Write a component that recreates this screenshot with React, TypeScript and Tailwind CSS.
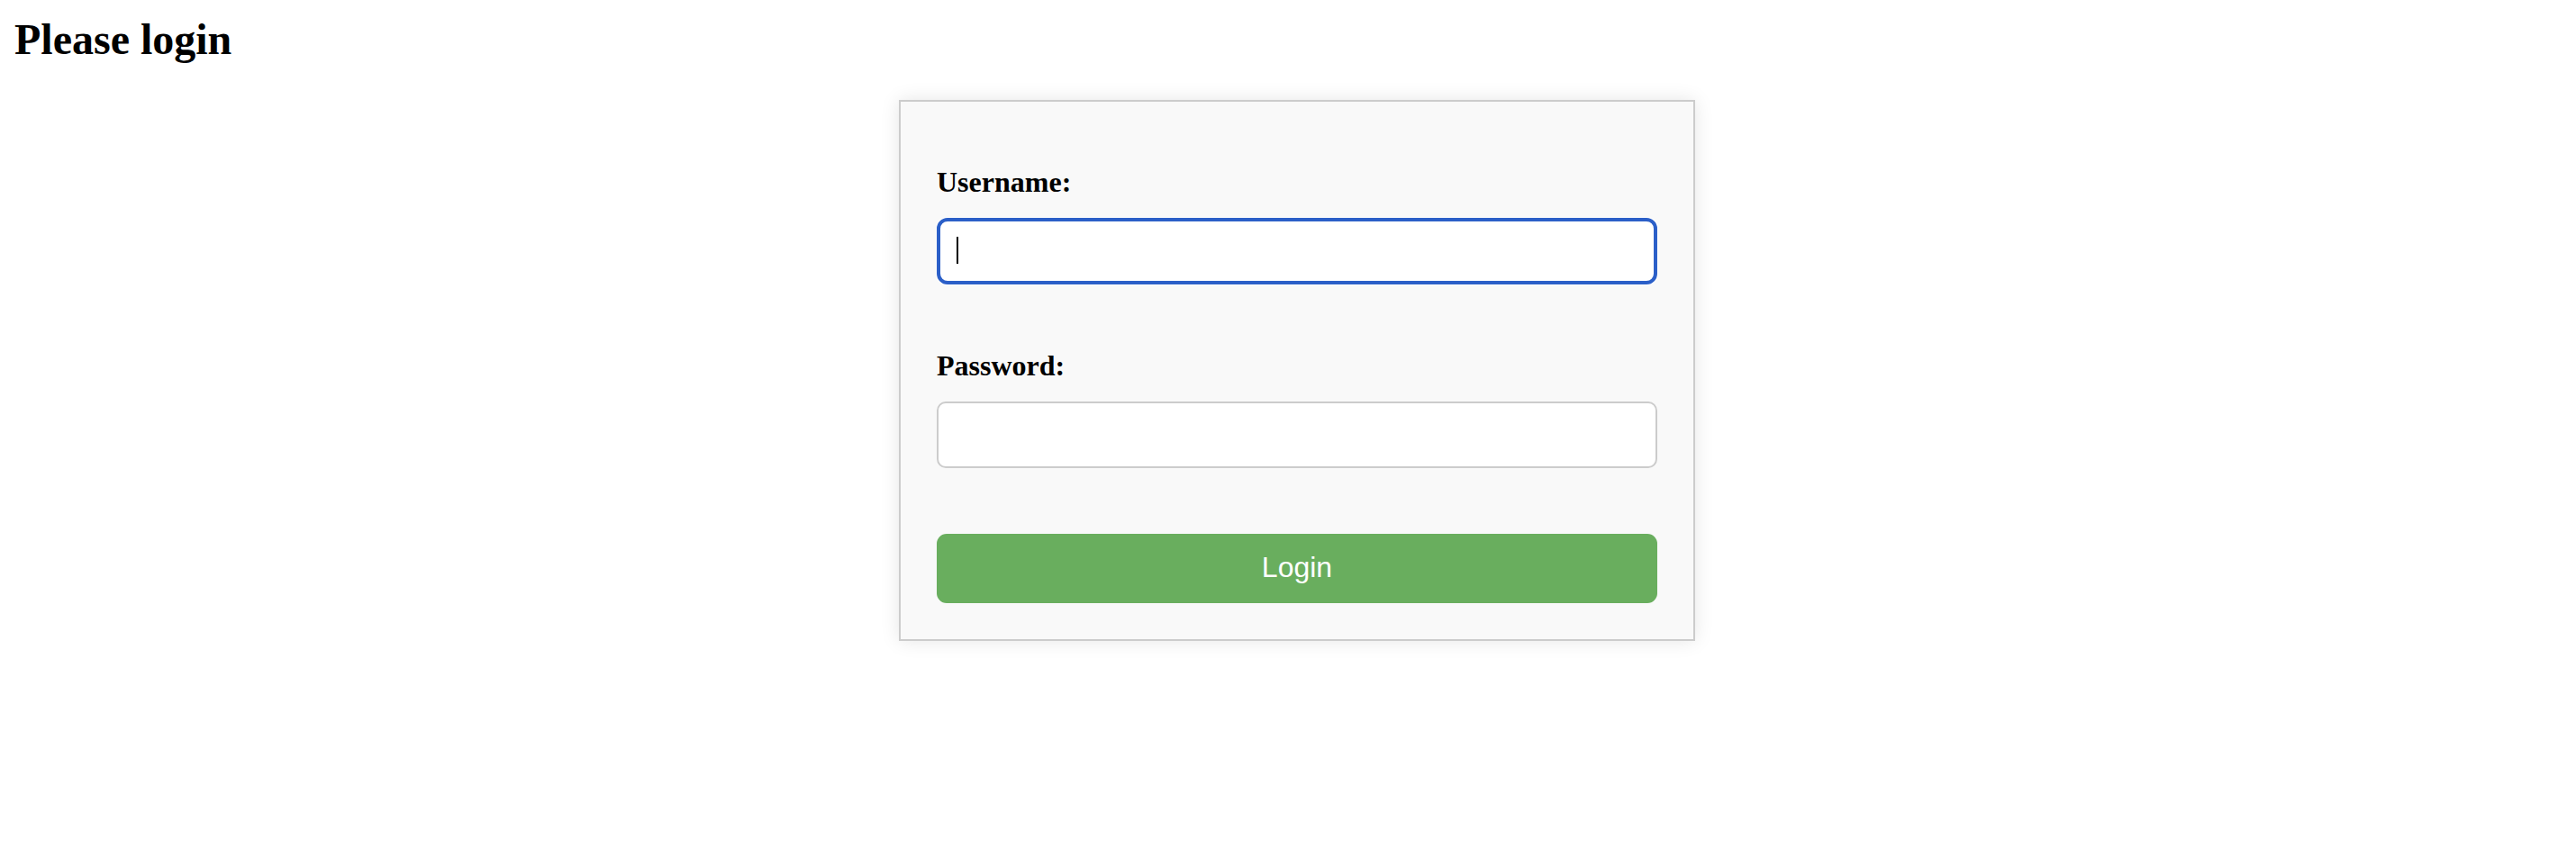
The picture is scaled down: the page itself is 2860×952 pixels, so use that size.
import { useState } from 'react'

export default function App() {
  const [username, setUsername] = useState('')
  const [password, setPassword] = useState('')

  return (
    <div className="min-h-[952px] bg-white text-black font-['Liberation_Serif','Times_New_Roman',serif]">
      <h1 className="pt-[16px] pl-[16px] text-[48px] leading-[55px] font-bold">Please login</h1>

      {/* Login card */}
      <div className="mt-[40px] flex justify-center pl-[20px]">
        <form
          onSubmit={(e) => e.preventDefault()}
          className="w-[884px] border-2 border-[#cccccc] bg-[#f9f9f9] px-[40px] pt-[71px] pb-[40px] shadow-[0_0_20px_rgba(0,0,0,0.1)] flex flex-col"
        >
          <label htmlFor="username" className="block text-[32px] leading-[37px] font-bold mb-[21px]">
            Username:
          </label>
          <div className="relative">
            <input
              id="username"
              type="text"
              value={username}
              onChange={(e) => setUsername(e.target.value)}
              className="block w-full h-[74px] rounded-[12px] border-[4px] border-[#2b5fc8] bg-white px-[18px] text-[32px] outline-none shadow-[0_0_0_1px_#ffffff]"
            />
            {/* caret */}
            {username === '' && (
              <span className="absolute left-[22px] top-[21px] w-[2px] h-[30px] bg-black" />
            )}
          </div>

          <label htmlFor="password" className="block mt-[72px] text-[32px] leading-[37px] font-bold mb-[21px]">
            Password:
          </label>
          <input
            id="password"
            type="password"
            value={password}
            onChange={(e) => setPassword(e.target.value)}
            className="block w-full h-[74px] rounded-[10px] border-2 border-[#cccccc] bg-white px-[20px] text-[32px] outline-none"
          />

          <button
            type="submit"
            className="mt-[73px] w-full h-[77px] pb-[3px] rounded-[11px] bg-[#69ae5e] text-white text-[32px] font-['Liberation_Sans',Arial,sans-serif]"
          >
            Login
          </button>
        </form>
      </div>
    </div>
  )
}
